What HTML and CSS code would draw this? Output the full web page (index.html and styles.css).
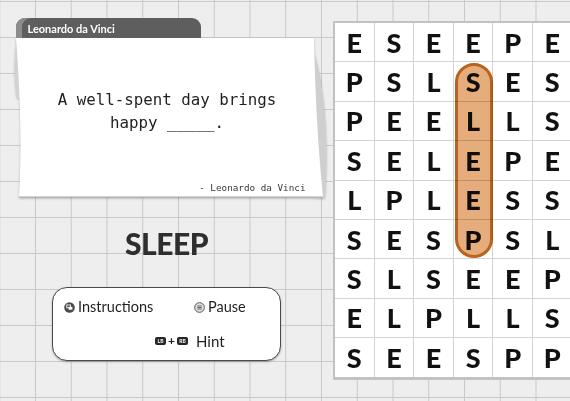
FILE: index.html
```html
<!DOCTYPE html>
<html lang="en">
<head>
<meta charset="utf-8">
<title>Word Search</title>
<link rel="stylesheet" href="styles.css">
</head>
<body>
<div class="screen">
  <div class="left">
    <div class="card">
      <div class="tab">Leonardo da Vinci</div>
      <div class="paper">
        <svg class="paper-bg" viewBox="0 0 310 160" preserveAspectRatio="none" aria-hidden="true">
          <path d="M294 0 C310 40 314 100 310 160 L300 160 Z" fill="#cfcfcf"/>
          <path d="M2 0 C-1 20 -1 40 2 60 L6 60 Z" fill="#d2d2d2"/>
          <path d="M1 0 L299 0 C300 55 303 110 308 159 L4 159 C7 110 5 50 1 0 Z" fill="#ffffff"/>
          <path d="M4 159 L308 159" stroke="#a9a9a9" stroke-width="1.2" fill="none"/>
        </svg>
        <p class="quote">A well-spent day brings<br>happy _____.</p>
        <p class="author">- Leonardo da Vinci</p>
      </div>
    </div>
    <div class="word">SLEEP</div>
    <div class="controls">
      <div class="row1">
        <span class="ctl">
          <svg class="ico" viewBox="0 0 10 10" aria-hidden="true">
            <circle cx="5" cy="5" r="4.8" fill="#4a4a4a"/>
            <rect x="2.5" y="2.7" width="3.4" height="2.6" fill="none" stroke="#fff" stroke-width="0.8"/>
            <rect x="4.2" y="4.4" width="3.4" height="2.6" fill="#fff"/>
          </svg>Instructions
        </span>
        <span class="ctl">
          <svg class="ico" viewBox="0 0 10 10" aria-hidden="true">
            <circle cx="5" cy="5" r="4.4" fill="#e2e2e2" stroke="#555" stroke-width="0.9"/>
            <path d="M3 3.6 H7 M3 5 H7 M3 6.4 H7" stroke="#555" stroke-width="0.8"/>
          </svg>Pause
        </span>
      </div>
      <div class="row2">
        <span class="ctl">
          <span class="btn">LB</span><span class="plus">+</span><span class="btn">RB</span><span class="hint">Hint</span>
        </span>
      </div>
    </div>
  </div>
  <div class="board">
    <div class="grid">
      <span class="cell">E</span><span class="cell">S</span><span class="cell">E</span><span class="cell">E</span><span class="cell">P</span><span class="cell">E</span>
      <span class="cell">P</span><span class="cell">S</span><span class="cell">L</span><span class="cell">S</span><span class="cell">E</span><span class="cell">S</span>
      <span class="cell">P</span><span class="cell">E</span><span class="cell">E</span><span class="cell">L</span><span class="cell">L</span><span class="cell">S</span>
      <span class="cell">S</span><span class="cell">E</span><span class="cell">L</span><span class="cell">E</span><span class="cell">P</span><span class="cell">E</span>
      <span class="cell">L</span><span class="cell">P</span><span class="cell">L</span><span class="cell">E</span><span class="cell">S</span><span class="cell">S</span>
      <span class="cell">S</span><span class="cell">E</span><span class="cell">S</span><span class="cell">P</span><span class="cell">S</span><span class="cell">L</span>
      <span class="cell">S</span><span class="cell">L</span><span class="cell">S</span><span class="cell">E</span><span class="cell">E</span><span class="cell">P</span>
      <span class="cell">E</span><span class="cell">L</span><span class="cell">P</span><span class="cell">L</span><span class="cell">L</span><span class="cell">S</span>
      <span class="cell">S</span><span class="cell">E</span><span class="cell">E</span><span class="cell">S</span><span class="cell">P</span><span class="cell">P</span>
    </div>
    <div class="pill"></div>
  </div>
</div>
</body>
</html>
```
FILE: styles.css
```css
html, body {
  margin: 0;
  padding: 0;
}
body {
  width: 570px;
  height: 401px;
  overflow: hidden;
  background-color: #eeeeee;
  background-image:
    linear-gradient(to right, #c9c9c9 1px, transparent 1px),
    linear-gradient(to bottom, #c9c9c9 1px, transparent 1px);
  background-size: 35.75px 36px;
  background-position: -0.75px 1px;
  font-family: "Lato", "Liberation Sans", sans-serif;
}
.screen {
  display: flex;
  align-items: flex-start;
}
.left {
  width: 333px;
  flex: none;
  display: flex;
  flex-direction: column;
  align-items: center;
  padding-top: 18px;
}
.card {
  width: 310px;
  margin-left: 6px;
  display: flex;
  flex-direction: column;
}
.tab {
  width: 173px;
  height: 20px;
  margin-left: 1px;
  padding-left: 12px;
  background: #5e5e5e;
  border-radius: 9px 9px 0 0;
  box-shadow: inset 6px 0 0 #8c8c8c;
  color: #ffffff;
  font-weight: 700;
  font-size: 11px;
  line-height: 21px;
}
.paper {
  position: relative;
  height: 160px;
  display: flex;
  flex-direction: column;
  font-family: "DejaVu Sans Mono", "Liberation Mono", monospace;
}
.paper-bg {
  position: absolute;
  left: 0;
  top: 0;
  width: 100%;
  height: 100%;
  overflow: visible;
  z-index: -1;
  filter: drop-shadow(0 1px 1px rgba(0, 0, 0, 0.25));
}
.quote {
  margin: 50px 0 0 0;
  padding-right: 5px;
  text-align: center;
  font-size: 15.8px;
  line-height: 23px;
  color: #1f1f1f;
}
.author {
  margin: auto 0 0 0;
  padding: 0 19px 4px 0;
  text-align: right;
  font-size: 9.3px;
  line-height: 12px;
  color: #3a3a3a;
}
.word {
  margin-top: 30px;
  font-size: 30px;
  line-height: 30px;
  font-weight: 900;
  color: #2e2e2e;
  letter-spacing: -0.5px;
}
.controls {
  margin-top: 29px;
  width: 227px;
  height: 72px;
  box-sizing: content-box;
  background: #ffffff;
  border: 1px solid #4a4a4a;
  border-radius: 15px;
  box-shadow: 0 1px 2px rgba(0, 0, 0, 0.3);
  display: flex;
  flex-direction: column;
}
.row1 {
  display: grid;
  grid-template-columns: 130px auto;
  padding: 10px 0 0 11px;
  height: 18px;
}
.row2 {
  padding: 16px 0 0 102px;
  height: 18px;
}
.ctl {
  display: flex;
  align-items: center;
  gap: 3px;
  font-size: 14.5px;
  line-height: 18px;
  color: #1f1f1f;
}
.ico {
  width: 11px;
  height: 11px;
  flex: none;
}
.btn {
  width: 11px;
  height: 8px;
  border-radius: 2px;
  background: #262626;
  color: #ffffff;
  font-size: 5px;
  font-weight: 700;
  line-height: 8px;
  text-align: center;
}
.plus {
  font-size: 12px;
  font-weight: 700;
  margin: 0 -1px;
}
.hint {
  font-size: 15px;
  margin-left: 5px;
}
.board {
  position: relative;
  flex: none;
  margin-top: 21px;
  border: 2px solid #c2c2c2;
  border-bottom-width: 3px;
  background: #d3d3d3;
}
.grid {
  display: grid;
  grid-template-columns: repeat(6, 38.6px);
  grid-template-rows: repeat(9, 38.4px);
  gap: 1px;
}
.cell {
  background: #ffffff;
  display: flex;
  align-items: center;
  justify-content: center;
  font-weight: 900;
  font-size: 27px;
  color: #111111;
}
.pill {
  position: absolute;
  left: 120px;
  top: 40px;
  width: 38px;
  height: 195px;
  box-sizing: border-box;
  border: 3px solid #b9631f;
  border-radius: 19px;
  background: rgba(216, 132, 62, 0.68);
  mix-blend-mode: multiply;
}
```
